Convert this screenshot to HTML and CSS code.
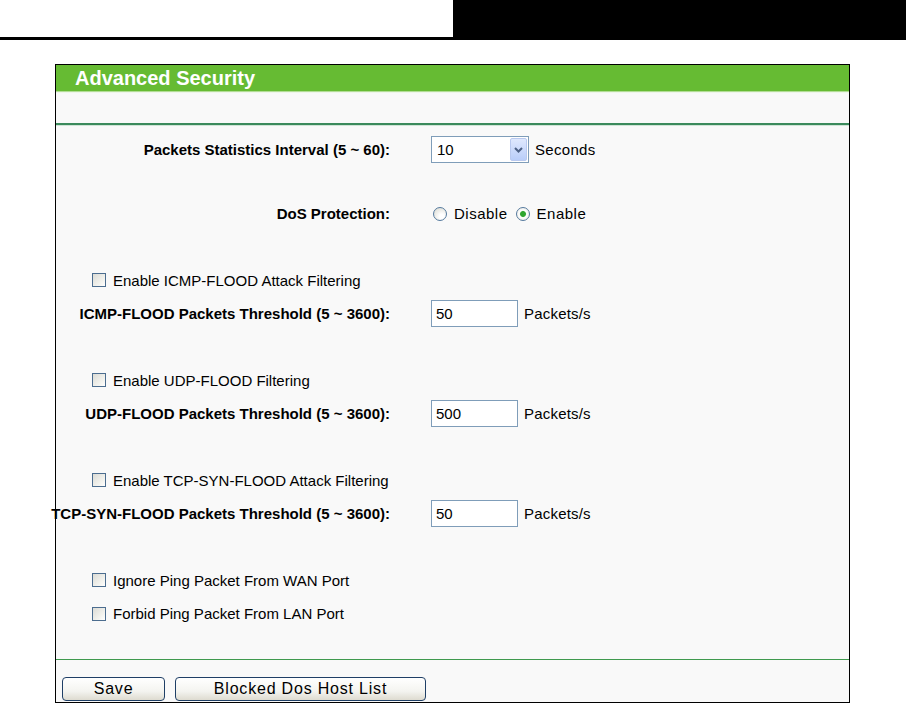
FILE: index.html
```html
<!DOCTYPE html>
<html>
<head>
<meta charset="utf-8">
<title>Advanced Security</title>
<link rel="stylesheet" href="styles.css">
</head>
<body>
<div class="topbar"><div class="topbar-left"></div></div>
<div class="panel">
  <div class="panel-title">Advanced Security</div>
  <div class="panel-band"></div>
  <div class="form">
    <div class="label">Packets Statistics Interval (5 ~ 60):</div>
    <div class="ctrl">
      <div class="select"><span class="select-val">10</span><span class="select-btn"><svg width="9" height="6" viewBox="0 0 9 6"><path d="M1 1 L4.5 4.5 L8 1" fill="none" stroke="#4d6185" stroke-width="2"/></svg></span></div>
      <span class="unit">Seconds</span>
    </div>
    <div class="spacer"></div>

    <div class="label">DoS Protection:</div>
    <div class="ctrl">
      <input type="radio" name="dos" class="radio"><span class="rtext">Disable</span>
      <input type="radio" name="dos" class="radio" checked><span class="rtext">Enable</span>
    </div>
    <div class="spacer"></div>

    <label class="check"><input type="checkbox" class="cb"><span>Enable ICMP-FLOOD Attack Filtering</span></label>
    <div class="label">ICMP-FLOOD Packets Threshold (5 ~ 3600):</div>
    <div class="ctrl"><input type="text" class="num" value="50"><span class="unit-p">Packets/s</span></div>
    <div class="spacer"></div>

    <label class="check"><input type="checkbox" class="cb"><span>Enable UDP-FLOOD Filtering</span></label>
    <div class="label">UDP-FLOOD Packets Threshold (5 ~ 3600):</div>
    <div class="ctrl"><input type="text" class="num" value="500"><span class="unit-p">Packets/s</span></div>
    <div class="spacer"></div>

    <label class="check"><input type="checkbox" class="cb"><span>Enable TCP-SYN-FLOOD Attack Filtering</span></label>
    <div class="label">TCP-SYN-FLOOD Packets Threshold (5 ~ 3600):</div>
    <div class="ctrl"><input type="text" class="num" value="50"><span class="unit-p">Packets/s</span></div>
    <div class="spacer"></div>

    <label class="check"><input type="checkbox" class="cb"><span>Ignore Ping Packet From WAN Port</span></label>
    <label class="check"><input type="checkbox" class="cb"><span>Forbid Ping Packet From LAN Port</span></label>
  </div>
  <div class="actions">
    <button class="btn btn-save">Save</button>
    <button class="btn btn-list">Blocked Dos Host List</button>
  </div>
</div>
</body>
</html>
```
FILE: styles.css
```css
html, body {
  margin: 0;
  padding: 0;
  background: #ffffff;
  font-family: "Liberation Sans", Arial, sans-serif;
  color: #000;
  overflow: hidden;
}

.topbar {
  height: 40px;
  background: #000;
}
.topbar-left {
  width: 453px;
  height: 37px;
  background: #fff;
}

.panel {
  margin: 24px 0 0 55px;
  width: 795px;
  box-sizing: border-box;
  border: 1px solid #000;
  background: #f9f9f9;
}

.panel-title {
  height: 26px;
  background: #66bb33;
  border-bottom: 1px solid #b3dd96;
  color: #fff;
  font-weight: bold;
  font-size: 20px;
  line-height: 26px;
  padding-left: 19px;
}

.panel-band {
  height: 30px;
  background: #f9f9f9;
  border-top: 1px solid #eef6ea;
  border-bottom: 2px solid #3b8a5c;
  box-shadow: 0 1px 0 #cfe4d6;
}

.form {
  display: grid;
  grid-template-columns: 334px 1fr;
  grid-template-rows: 33px 31px repeat(13, 33.333px);
  padding: 8px 0 29px 0;
  font-size: 15px;
  border-bottom: 1px solid #3f9a4e;
}

.label {
  display: flex;
  align-items: center;
  justify-content: flex-end;
  white-space: nowrap;
  font-weight: bold;
  min-width: 0;
}

.ctrl {
  display: flex;
  align-items: center;
  padding-left: 41px;
  white-space: nowrap;
}

.spacer {
  grid-column: 1 / 3;
}

.select {
  width: 98px;
  height: 27px;
  box-sizing: border-box;
  border: 1px solid #7f9db9;
  background: #fff;
  display: flex;
  align-items: center;
  justify-content: space-between;
  padding: 0 1px 0 5px;
}
.select-btn {
  width: 17px;
  height: 23px;
  box-sizing: border-box;
  border: 1px solid #b9c9ef;
  border-radius: 2px;
  background: linear-gradient(#dfe8fd, #b9cdf9);
  display: flex;
  align-items: center;
  justify-content: center;
}
.unit {
  margin-left: 6px;
  letter-spacing: 0.3px;
}

.radio {
  appearance: none;
  -webkit-appearance: none;
  width: 14px;
  height: 14px;
  margin: 1px 0 0 2px;
  border: 1px solid #557a9e;
  border-radius: 50%;
  background: radial-gradient(circle at 65% 70%, #ffffff 20%, #dcdcd4 90%);
  box-sizing: border-box;
}
.radio:checked {
  background: radial-gradient(circle, #2ea52e 0 2.5px, #9ed49e 3px, #fff 3.6px, #e4e4dc 100%);
}
.rtext {
  margin-left: 7px;
  margin-right: 6px;
  letter-spacing: 0.5px;
}

.check {
  grid-column: 1 / 3;
  display: flex;
  align-items: center;
  padding-left: 36px;
  white-space: nowrap;
}
.cb {
  appearance: none;
  -webkit-appearance: none;
  width: 14px;
  height: 14px;
  margin: 0 7px 0 0;
  box-sizing: border-box;
  border: 1px solid #4c6d8f;
  background: linear-gradient(135deg, #dcdcd6 0%, #f4f4f0 70%, #ffffff 100%);
}

.num {
  width: 87px;
  height: 27px;
  box-sizing: border-box;
  border: 1px solid #7f9db9;
  background: #fff;
  font-family: "Liberation Sans", Arial, sans-serif;
  font-size: 15px;
  padding: 0 0 0 4px;
  margin: 0;
  color: #000;
}
.unit-p {
  margin-left: 6px;
  letter-spacing: 0.2px;
}

.actions {
  display: flex;
  gap: 10px;
  padding: 17px 0 0 6px;
  height: 42px;
  box-sizing: border-box;
}

.btn {
  height: 24px;
  box-sizing: border-box;
  border: 1px solid #1f3f66;
  border-radius: 4px;
  background: linear-gradient(#ffffff 0%, #f4f4f0 60%, #dedbd0 100%);
  font-family: "Liberation Sans", Arial, sans-serif;
  font-size: 16px;
  letter-spacing: 0.8px;
  color: #000;
  padding: 0;
}
.btn-save {
  width: 103px;
}
.btn-list {
  width: 251px;
}
```
